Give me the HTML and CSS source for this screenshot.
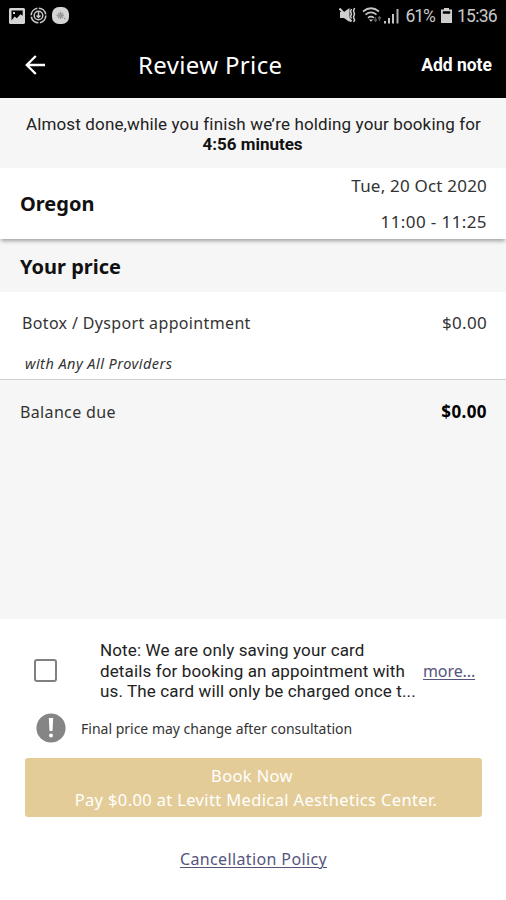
FILE: index.html
```html
<!DOCTYPE html>
<html lang="en">
<head>
  <meta charset="UTF-8">
  <meta name="viewport" content="width=device-width, initial-scale=1.0">
  <title>Review Price</title>
  <link rel="stylesheet" href="styles.css">
</head>
<body>
  <header class="top">
    <div class="status-bar">
      <div class="status-left">
        <svg width="16" height="16" viewBox="0 0 16 16">
          <path fill="#d4d4d4" fill-rule="evenodd" d="M1.500 0h13q1.500 0 1.500 1.500v13q0 1.500-1.500 1.500h-13q-1.500 0-1.500-1.500v-13q0-1.500 1.500-1.500zM2.500 2.500v10l3.200-4 2.200 1.800 3.500-4 2.300 1.500v-5.300z"/>
          <path fill="#d4d4d4" d="M4 4h2v2h-2z"/>
        </svg>
        <svg width="17" height="17" viewBox="0 0 17 17" fill="none" stroke="#c8c8c8">
          <circle cx="8.500" cy="8.500" r="7.300" stroke-width="1.600" stroke-dasharray="10 1.500"/>
          <circle cx="8.500" cy="8.500" r="4.300" stroke-width="1.500"/>
          <path stroke-width="1.500" d="M8.500 5v5.500M6.500 8.500l2 2 2-2"/>
        </svg>
        <svg width="17" height="17" viewBox="0 0 17 17">
          <rect width="17" height="17" rx="7" fill="#d4d4d4"/>
          <path stroke="#999" stroke-width="1.300" d="M4.500 8.500h7.500M8.500 4.500v7.500M6 6l5 5M11 6l-5 5M12 11.500h1.500"/>
        </svg>
      </div>
      <div class="status-right">
        <svg class="mute" width="17" height="17" viewBox="0 0 17 17">
          <path fill="#cfcfcf" d="M1 5h4l5.500-4v14l-5.500-4h-4z"/>
          <path stroke="#cfcfcf" stroke-width="2" d="M0.500 1.500l12 13"/>
          <path stroke="#cfcfcf" stroke-width="1.500" fill="none" d="M12.500 2l-1 2.500 1 2.500-1 2.500 1 2M15.500 1l-1 3 1 3-1 3 1 3-.8 2"/>
        </svg>
        <svg class="wifi" width="20" height="17" viewBox="0 0 20 17" fill="none" stroke="#c4c4c4" stroke-width="1.700">
          <path d="M1 4.500q8-6.500 16 0M3.500 7.700q5.500-4.500 11 0M6 10.800q3-2.500 6 0"/>
          <path fill="#c4c4c4" stroke="none" d="M6.800 12.500h4.400l-2.200 2.300z"/>
          <path stroke="#555" stroke-width="1.300" d="M13.500 10v4M12 12.500l1.500 1.700 1.500-1.700M17.500 14v-4M16 11.500l1.500-1.700 1.500 1.700"/>
        </svg>
        <svg class="signal" width="15" height="16" viewBox="0 0 15 16">
          <path fill="#c4c4c4" d="M0 13h2v2.500h-2zM4 10h2v5.500h-2zM8 6h2v9.500h-2z"/>
          <path fill="#b0b0b0" d="M12.500 1h2v14.500h-2z"/>
        </svg>
        <span class="percent">61%</span>
        <svg class="battery" width="11" height="15" viewBox="0 0 11 15">
          <path fill="#cfcfcf" fill-rule="evenodd" d="M3 0h5v1.500h3v13.500h-11v-13.500h3zM1.800 3.200v2.600h7.400v-2.600z"/>
        </svg>
        <span class="clock">15:36</span>
      </div>
    </div>
    <nav class="app-bar">
      <svg class="back" width="20" height="20" viewBox="0 0 20 20" fill="none" stroke="#fff" stroke-width="2.400">
        <path d="M20 10h-18M10.800 1l-9 9 9 9"/>
      </svg>
      <h1>Review Price</h1>
      <a class="add-note">Add note</a>
    </nav>
  </header>

  <main>
    <div class="notice">
      <p class="notice-text">Almost done,while you finish we’re holding your booking for</p>
      <p><strong>4:56 minutes</strong></p>
    </div>

    <section class="location">
      <h2>Oregon</h2>
      <div class="when">
        <div class="date">Tue, 20 Oct 2020</div>
        <div class="time">11:00 - 11:25</div>
      </div>
    </section>

    <h2 class="price-title">Your price</h2>

    <section class="item">
      <div class="row">
        <span class="service">Botox / Dysport appointment</span>
        <span class="amount">$0.00</span>
      </div>
      <div class="provider">with Any All Providers</div>
    </section>

    <section class="balance row">
      <span class="due">Balance due</span>
      <strong class="total">$0.00</strong>
    </section>
  </main>

  <footer>
    <div class="card-note">
      <span class="checkbox"></span>
      <p>Note: We are only saving your card<br>details for booking an appointment with<br>us. The card will only be charged once t...</p>
      <a class="more">more...</a>
    </div>
    <div class="warning">
      <svg width="30" height="30" viewBox="0 0 30 30">
        <circle cx="15" cy="15" r="14.600" fill="#858585"/>
        <path fill="#fff" d="M12.800 5h4.400l-.7 13h-3z"/>
        <circle cx="15" cy="22.500" r="2" fill="#fff"/>
      </svg>
      <span>Final price may change after consultation</span>
    </div>
    <button class="book">
      <span class="book-now">Book Now</span>
      <span class="pay">Pay $0.00 at Levitt Medical Aesthetics Center.</span>
    </button>
    <a class="policy">Cancellation Policy</a>
  </footer>
</body>
</html>
```
FILE: styles.css
```css
* {
  box-sizing: border-box;
}

body {
  font-family: "Noto Sans", "Open Sans", sans-serif;
  margin: 0;
  height: 900px;
  display: flex;
  flex-direction: column;
  background-color: #fff;
  color: #333;
  font-size: 16px;
  white-space: nowrap;
  overflow: hidden;
}

h1, h2, p {
  margin: 0;
}

/* Status bar and title bar */
.top {
  height: 98px;
  background-color: #000;
  color: #fff;
}

.status-bar {
  height: 31px;
  padding: 0 9px;
  display: flex;
  justify-content: space-between;
  align-items: center;
  font-family: Roboto, sans-serif;
  font-size: 17.5px;
  color: #c8c8c8;
}

.status-left,
.status-right {
  display: flex;
  align-items: center;
}

.status-left {
  gap: 5px;
}

.wifi {
  margin-left: 6px;
}

.signal {
  margin-left: 2px;
}

.percent {
  margin-left: 6px;
  letter-spacing: -1px;
}

.battery {
  margin-left: 6px;
}

.clock {
  margin-left: 5px;
  letter-spacing: -0.7px;
}

.app-bar {
  height: 67px;
  padding: 0 14px 0 25px;
  display: grid;
  grid-template-columns: 100px 220px 1fr;
  align-items: center;
}

.app-bar h1 {
  margin-left: 13px;
  font-size: 24px;
  font-weight: 400;
  letter-spacing: 0.35px;
}

.add-note {
  justify-self: end;
  font-family: Roboto, sans-serif;
  font-size: 17.5px;
  font-weight: 700;
}

/* Holding time message */
.notice {
  height: 70px;
  padding: 16px 0 0 1px;
  background-color: #f6f6f6;
  font-family: Roboto, sans-serif;
  font-size: 17px;
  line-height: 20px;
  text-align: center;
  color: #222;
}

.notice-text {
  letter-spacing: 0.14px;
}

.notice strong {
  margin-right: 2px;
  color: #111;
}

/* Clinic and appointment time */
.location {
  position: relative;
  height: 71px;
  padding: 0 19px 0 20px;
  display: flex;
  justify-content: space-between;
  align-items: center;
  background-color: #fff;
  box-shadow: 0 3px 4px -1px rgba(0, 0, 0, 0.35);
}

h2 {
  font-size: 20px;
  font-weight: 700;
  color: #111;
}

.when {
  text-align: right;
  font-size: 17px;
  line-height: 36px;
}

.date {
  letter-spacing: 0.2px;
}

.time {
  letter-spacing: 0.4px;
}

.price-title {
  height: 53px;
  padding-left: 20px;
  line-height: 55px;
  background-color: #f6f6f6;
}

/* Price rows */
.row {
  display: flex;
  justify-content: space-between;
}

.item {
  height: 88px;
  padding: 19px 19px 0 22px;
  border-bottom: 1px solid #cfcfcf;
  line-height: 24px;
}

.service,
.due {
  letter-spacing: 0.35px;
}

.amount {
  font-size: 17px;
  letter-spacing: 0.3px;
}

.provider {
  margin: 16px 0 0 3px;
  font-size: 14.5px;
  font-style: italic;
  letter-spacing: 0.45px;
}

.balance {
  height: 239px;
  padding: 20px 19px 0 20px;
  background-color: #f6f6f6;
  line-height: 24px;
}

.total {
  color: #000;
  font-size: 17px;
  letter-spacing: 0.4px;
}

/* Card note, warning and booking button */
footer {
  flex: 1;
  padding: 21px 24px 0 25px;
  display: flex;
  flex-direction: column;
}

.card-note {
  height: 62px;
  display: grid;
  grid-template-columns: 75px 323px 1fr;
  align-items: center;
  font-family: Roboto, sans-serif;
  font-size: 17px;
  line-height: 20.5px;
  letter-spacing: 0.13px;
  color: #222;
}

.checkbox {
  width: 23px;
  height: 23px;
  margin: 0 0 2px 9px;
  border: 2px solid #808080;
  border-radius: 3px;
}

.more,
.policy {
  color: #55557c;
  text-decoration: underline;
  text-decoration-thickness: 1px;
  text-underline-offset: 2px;
}

.more {
  font-family: "Noto Sans", sans-serif;
  font-size: 16px;
  letter-spacing: -0.1px;
}

.warning {
  height: 56px;
  padding: 0 0 4px 11px;
  display: flex;
  align-items: center;
  gap: 15px;
  font-size: 14px;
}

.book {
  height: 59px;
  padding: 0;
  border: none;
  border-radius: 3px;
  display: flex;
  flex-direction: column;
  align-items: center;
  justify-content: center;
  background-color: #e4cc98;
  color: #fff;
  font-family: inherit;
  font-size: 16.5px;
  line-height: 24px;
  letter-spacing: 0.36px;
}

.book-now {
  margin-right: 3px;
}

.pay {
  margin-left: 5px;
}

.policy {
  align-self: center;
  margin-top: 30px;
  font-size: 16px;
  line-height: 24px;
  letter-spacing: 0.37px;
}
```
